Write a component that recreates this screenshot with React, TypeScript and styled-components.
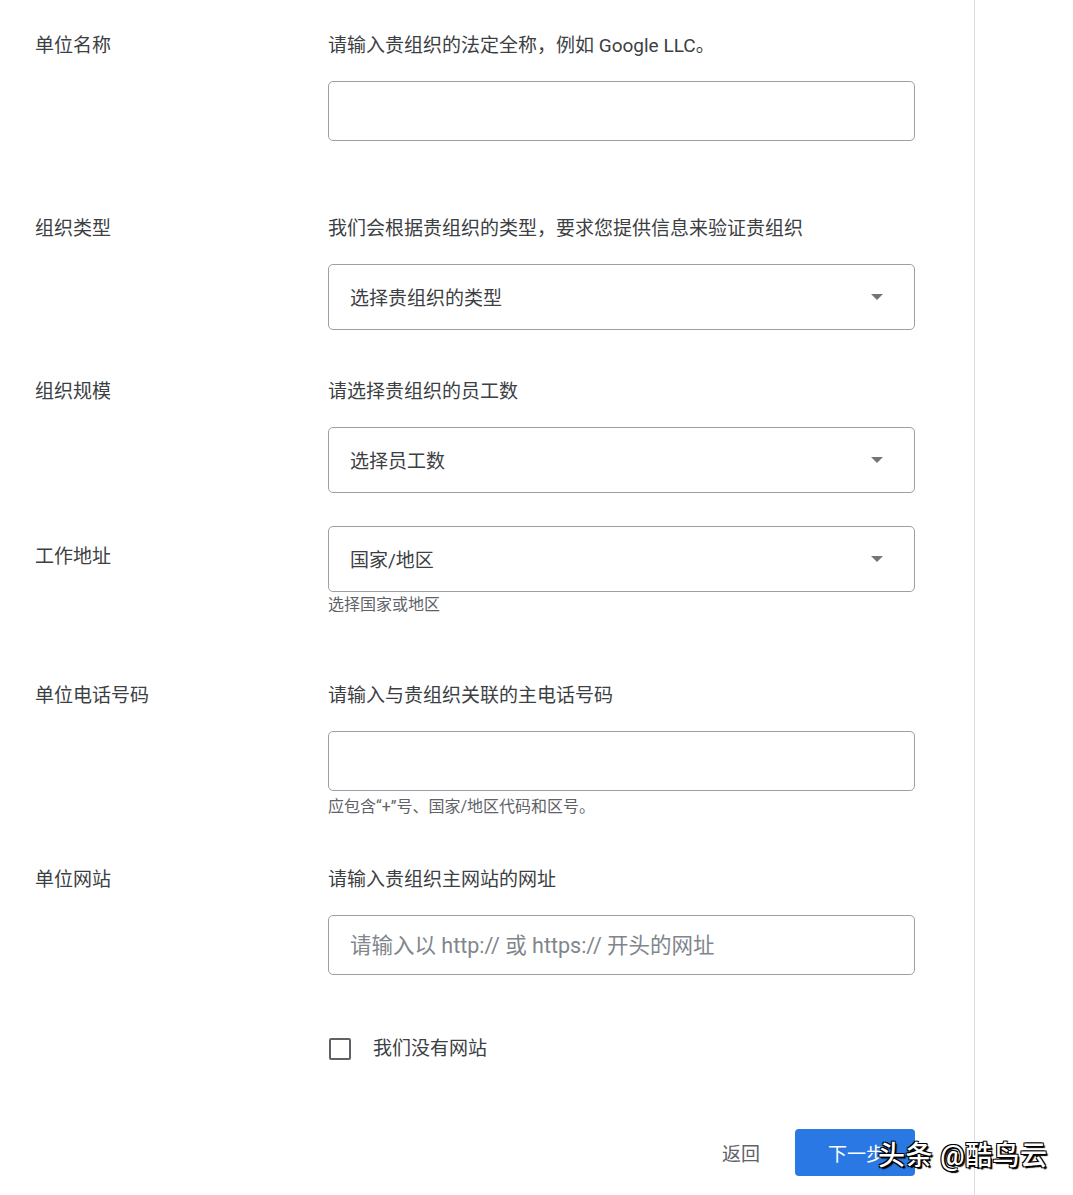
import styled, { createGlobalStyle } from 'styled-components';

const GlobalStyle = createGlobalStyle`
  * {
    box-sizing: border-box;
  }
  body {
    margin: 0;
    background: #ffffff;
    font-family: Roboto, 'Noto Sans CJK SC', sans-serif;
    color: #3c4043;
  }
`;

interface GapProps {
  top: number;
}

interface SelectProps {
  height: number;
}

const Page = styled.div`
  position: relative;
  width: 1073px;
  min-height: 1195px;
  overflow: hidden;
`;

const Panel = styled.div`
  width: 975px;
  min-height: 1195px;
  padding: 35px 0 0 35px;
  border-right: 1px solid #dadce0;
`;

const Row = styled.div<GapProps>`
  display: grid;
  grid-template-columns: 293px 587px;
  margin-top: ${({ top }) => top}px;
`;

const Label = styled.div<GapProps>`
  padding-top: ${({ top }) => top}px;
  font-size: 19px;
  line-height: 22px;
  color: #3c4043;
`;

const Field = styled.div`
  display: flex;
  flex-direction: column;
`;

const Desc = styled.div`
  font-size: 19px;
  line-height: 22px;
  color: #3c4043;
  margin-bottom: 24px;
`;

const TextInput = styled.input`
  width: 587px;
  height: 60px;
  border: 1px solid #9aa0a6;
  border-radius: 5px;
  padding: 0 21px;
  font-family: inherit;
  font-size: 21.5px;
  color: #3c4043;
  outline: none;

  &::placeholder {
    color: #80868b;
  }
`;

const Select = styled.div<SelectProps>`
  display: flex;
  align-items: center;
  justify-content: space-between;
  width: 587px;
  height: ${({ height }) => height}px;
  border: 1px solid #9aa0a6;
  border-radius: 5px;
  padding: 0 31px 2px 21px;
  font-size: 19px;
  color: #3c4043;
`;

const Arrow = styled.span`
  width: 0;
  height: 0;
  margin-top: 2px;
  border-left: 6px solid transparent;
  border-right: 6px solid transparent;
  border-top: 6px solid #757575;
`;

const Helper = styled.div<GapProps>`
  margin-top: ${({ top }) => top}px;
  font-size: 16px;
  line-height: 20px;
  color: #5f6368;
`;

const CheckRow = styled.label`
  display: flex;
  align-items: center;
  gap: 22px;
  margin: 63px 0 0 294px;
  font-size: 19px;
  line-height: 22px;
  color: #3c4043;
`;

const CheckBox = styled.span`
  display: block;
  width: 22px;
  height: 22px;
  border: 2px solid #5f6368;
  border-radius: 2px;
`;

const Actions = styled.div`
  display: flex;
  justify-content: flex-end;
  align-items: center;
  gap: 35px;
  width: 880px;
  margin-top: 69px;
`;

const BackButton = styled.button`
  border: none;
  background: none;
  padding: 0;
  font-family: inherit;
  font-size: 19px;
  color: #5f6368;
`;

const NextButton = styled.button`
  width: 120px;
  height: 47px;
  border: none;
  border-radius: 4px;
  background: #2a78e4;
  font-family: inherit;
  font-size: 19px;
  color: #ffffff;
  text-align: left;
  padding-left: 33px;
`;

const Watermark = styled.div`
  position: absolute;
  left: 878px;
  top: 1139px;
  font-size: 27px;
  line-height: 34px;
  font-weight: 500;
  color: #ffffff;
  letter-spacing: 0.5px;
  text-shadow: -1px -1px 0 #000, 1px -1px 0 #000, -1px 1px 0 #000,
    1px 1px 0 #000, 2px 2px 1px #000;
  white-space: nowrap;
`;

const App = () => {
  return (
    <Page>
      <GlobalStyle />
      <Panel>
        <Row top={0}>
          <Label top={0}>单位名称</Label>
          <Field>
            <Desc>请输入贵组织的法定全称，例如 Google LLC。</Desc>
            <TextInput />
          </Field>
        </Row>

        <Row top={77}>
          <Label top={0}>组织类型</Label>
          <Field>
            <Desc>我们会根据贵组织的类型，要求您提供信息来验证贵组织</Desc>
            <Select height={66}>
              选择贵组织的类型
              <Arrow />
            </Select>
          </Field>
        </Row>

        <Row top={51}>
          <Label top={0}>组织规模</Label>
          <Field>
            <Desc>请选择贵组织的员工数</Desc>
            <Select height={66}>
              选择员工数
              <Arrow />
            </Select>
          </Field>
        </Row>

        <Row top={33}>
          <Label top={20}>工作地址</Label>
          <Field>
            <Select height={66}>
              国家/地区
              <Arrow />
            </Select>
            <Helper top={3}>选择国家或地区</Helper>
          </Field>
        </Row>

        <Row top={70}>
          <Label top={0}>单位电话号码</Label>
          <Field>
            <Desc>请输入与贵组织关联的主电话号码</Desc>
            <TextInput />
            <Helper top={6}>应包含“+”号、国家/地区代码和区号。</Helper>
          </Field>
        </Row>

        <Row top={52}>
          <Label top={0}>单位网站</Label>
          <Field>
            <Desc>请输入贵组织主网站的网址</Desc>
            <TextInput placeholder="请输入以 http:// 或 https:// 开头的网址" />
          </Field>
        </Row>

        <CheckRow>
          <CheckBox />
          我们没有网站
        </CheckRow>

        <Actions>
          <BackButton>返回</BackButton>
          <NextButton>下一步</NextButton>
        </Actions>
      </Panel>
      <Watermark>头条 @酷鸟云</Watermark>
    </Page>
  );
};

export default App;
